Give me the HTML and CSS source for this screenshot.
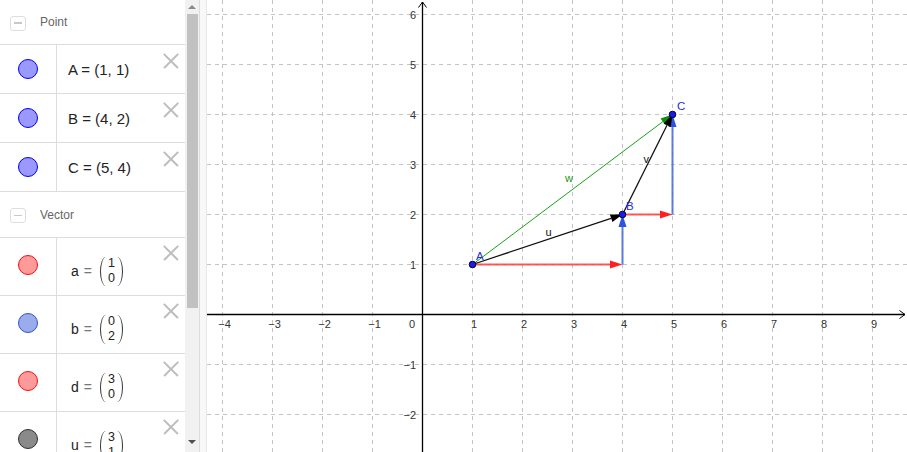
FILE: index.html
```html
<!DOCTYPE html>
<html>
<head>
<meta charset="utf-8">
<link rel="stylesheet" href="styles.css">
</head>
<body>
<div class="app">
  <div class="sidebar">
    <div class="list">
      <div class="group">
        <span class="toggle"></span><span class="gname">Point</span>
      </div>
      <div class="row">
        <div class="marble-col"><span class="marble m-point"></span></div>
        <div class="content">A = (1, 1)</div>
        <span class="del"></span>
      </div>
      <div class="row">
        <div class="marble-col"><span class="marble m-point"></span></div>
        <div class="content">B = (4, 2)</div>
        <span class="del"></span>
      </div>
      <div class="row">
        <div class="marble-col"><span class="marble m-point"></span></div>
        <div class="content">C = (5, 4)</div>
        <span class="del"></span>
      </div>
      <div class="group group-v">
        <span class="toggle"></span><span class="gname">Vector</span>
      </div>
      <div class="row vrow">
        <div class="marble-col"><span class="marble m-red"></span></div>
        <div class="content vec"><span class="vname">a</span><span class="eq">=</span><span class="pmat"><span class="nums"><span>1</span><span>0</span></span></span></div>
        <span class="del"></span>
      </div>
      <div class="row vrow">
        <div class="marble-col"><span class="marble m-blue"></span></div>
        <div class="content vec"><span class="vname">b</span><span class="eq">=</span><span class="pmat"><span class="nums"><span>0</span><span>2</span></span></span></div>
        <span class="del"></span>
      </div>
      <div class="row vrow">
        <div class="marble-col"><span class="marble m-red"></span></div>
        <div class="content vec"><span class="vname">d</span><span class="eq">=</span><span class="pmat"><span class="nums"><span>3</span><span>0</span></span></span></div>
        <span class="del"></span>
      </div>
      <div class="row vrow">
        <div class="marble-col"><span class="marble m-gray"></span></div>
        <div class="content vec"><span class="vname">u</span><span class="eq">=</span><span class="pmat"><span class="nums"><span>3</span><span>1</span></span></span></div>
        <span class="del"></span>
      </div>
    </div>
    <div class="scrollbar">
      <span class="arrow-up"></span>
      <span class="thumb"></span>
      <span class="track-rest"></span>
      <span class="arrow-down"></span>
    </div>
  </div>
  <div class="divider"></div>
  <div class="graph">
    <svg class="plot" width="700" height="452" viewBox="207 0 700 452" xmlns="http://www.w3.org/2000/svg">
      <path class="grid" d="M222.5 0V452M272.5 0V452M322.5 0V452M372.5 0V452M472.5 0V452M522.5 0V452M572.5 0V452M622.5 0V452M672.5 0V452M722.5 0V452M772.5 0V452M822.5 0V452M872.5 0V452M207 14.5H907M207 64.5H907M207 114.5H907M207 164.5H907M207 214.5H907M207 264.5H907M207 364.5H907M207 414.5H907"/>
      <path class="axis" d="M207 314.5H905M422.5 452V2"/>
      <path class="axis-arrow" d="M899.5 310.5L905 314.5L899.5 318.5M418.5 7.5L422.5 2L426.5 7.5"/>
      <g class="ticklabels">
        <text x="224.5" y="328" text-anchor="middle">−4</text>
        <text x="274.5" y="328" text-anchor="middle">−3</text>
        <text x="324.5" y="328" text-anchor="middle">−2</text>
        <text x="374.5" y="328" text-anchor="middle">−1</text>
        <text x="412" y="328" text-anchor="middle">0</text>
        <text x="474" y="328" text-anchor="middle">1</text>
        <text x="524" y="328" text-anchor="middle">2</text>
        <text x="574" y="328" text-anchor="middle">3</text>
        <text x="624" y="328" text-anchor="middle">4</text>
        <text x="674" y="328" text-anchor="middle">5</text>
        <text x="724" y="328" text-anchor="middle">6</text>
        <text x="774" y="328" text-anchor="middle">7</text>
        <text x="824" y="328" text-anchor="middle">8</text>
        <text x="874" y="328" text-anchor="middle">9</text>
        <text x="416" y="18.5" text-anchor="end">6</text>
        <text x="416" y="68.5" text-anchor="end">5</text>
        <text x="416" y="118.5" text-anchor="end">4</text>
        <text x="416" y="168.5" text-anchor="end">3</text>
        <text x="416" y="218.5" text-anchor="end">2</text>
        <text x="416" y="268.5" text-anchor="end">1</text>
        <text x="416" y="368.5" text-anchor="end">−1</text>
        <text x="416" y="418.5" text-anchor="end">−2</text>
      </g>
      <g class="v-red">
        <path d="M472.5 264.5H611"/>
        <polygon points="622.5,264.5 610,260.5 610,268.5"/>
        <path d="M622.5 214.5H661"/>
        <polygon points="672.5,214.5 660,210.5 660,218.5"/>
      </g>
      <g class="v-blue">
        <path d="M622.5 264.5V226"/>
        <polygon points="622.5,214.5 618.5,227 626.5,227"/>
        <path d="M672.5 214.5V126"/>
        <polygon points="672.5,114.5 668.5,127 676.5,127"/>
      </g>
      <g class="v-green">
        <path d="M472.5 264.5L663 121.5"/>
        <polygon points="672.5,114.5 665.3,124.9 660.5,118.5"/>
      </g>
      <g class="v-black">
        <path d="M472.5 264.5L611 218.3"/>
        <polygon points="622.5,214.5 612.4,222.1 609.9,214.5"/>
        <path d="M622.5 214.5L667 125.3"/>
        <polygon points="672.5,114.5 670.7,127 663.6,123.4"/>
      </g>
      <g class="pts">
        <circle cx="472.5" cy="264.5" r="3.3"/>
        <circle cx="622.5" cy="214.5" r="3.3"/>
        <circle cx="672.5" cy="114.5" r="3.3"/>
      </g>
      <g class="ptlabels">
        <text x="476" y="259.5">A</text>
        <text x="626" y="209.5">B</text>
        <text x="677" y="109.5">C</text>
      </g>
      <g class="vlabels">
        <text x="545.5" y="236">u</text>
        <text x="643.5" y="163">v</text>
        <text class="wl" x="565" y="181.5">w</text>
      </g>
    </svg>
  </div>
</div>
</body>
</html>
```

FILE: styles.css
```css
html, body {
  margin: 0;
  padding: 0;
  background: #ffffff;
}

.app {
  display: flex;
  width: 907px;
  height: 452px;
  overflow: hidden;
  font-family: "Liberation Sans", Arial, sans-serif;
}

.sidebar {
  display: flex;
  width: 199px;
  height: 452px;
  flex: none;
}

.list {
  width: 185px;
  flex: none;
  overflow: hidden;
  background: #ffffff;
}

.group {
  display: flex;
  align-items: center;
  height: 44px;
  border-bottom: 1px solid #dddddd;
  box-sizing: content-box;
  padding-left: 10px;
}

.group-v {
  height: 45px;
}

.toggle {
  position: relative;
  width: 14px;
  height: 13px;
  border: 1px solid #dedede;
  border-radius: 3px;
  display: flex;
  align-items: center;
  justify-content: center;
  margin-top: 2px;
}

.toggle::after {
  content: "";
  width: 8px;
  height: 1.5px;
  background: #c8c8c8;
}

.gname {
  margin-left: 14px;
  font-size: 12px;
  color: #666666;
}

.row {
  display: flex;
  height: 48px;
  border-bottom: 1px solid #dddddd;
}

.vrow {
  height: 57px;
}

.marble-col {
  width: 56px;
  flex: none;
  border-right: 1px solid #dddddd;
  display: flex;
  align-items: center;
  justify-content: center;
}

.marble {
  width: 18px;
  height: 18px;
  border-radius: 50%;
  border: 1px solid;
  margin-right: 1px;
}

.vrow .marble {
  margin-top: -3px;
}

.m-point {
  background: #9999ff;
  border-color: #0000ee;
}

.m-red {
  background: #ff9a9a;
  border-color: #ee1111;
}

.m-blue {
  background: #9aacec;
  border-color: #2f52cc;
}

.m-gray {
  background: #8a8a8a;
  border-color: #2e2e2e;
}

.content {
  flex: 1;
  display: flex;
  align-items: center;
  padding-left: 11px;
  font-size: 15px;
  color: #222222;
  white-space: pre;
}

.vec {
  padding-left: 14px;
  padding-top: 9px;
}

.vname {
  font-size: 14px;
  color: #222222;
}

.eq {
  font-size: 14px;
  color: #777777;
  margin: 0 8px 0 5px;
}

.pmat {
  display: flex;
  height: 29px;
}

.pmat::before,
.pmat::after {
  content: "";
  width: 5px;
  flex: none;
}

.pmat::before {
  border-left: 1.5px solid #333333;
  border-radius: 100% 0 0 100% / 50% 0 0 50%;
}

.pmat::after {
  border-right: 1.5px solid #333333;
  border-radius: 0 100% 100% 0 / 0 50% 50% 0;
}

.nums {
  display: flex;
  flex-direction: column;
  justify-content: center;
  align-items: center;
  font-size: 12.5px;
  line-height: 15px;
  color: #222222;
  padding: 0 2px;
}

.del {
  position: relative;
  width: 16px;
  height: 16px;
  margin: 8px 6px 0 0;
  flex: none;
}

.vrow .del {
  margin-top: 7px;
}

.del::before,
.del::after {
  content: "";
  position: absolute;
  left: -2px;
  top: 7.25px;
  width: 20px;
  height: 1.5px;
  background: #bdbdbd;
  transform: rotate(45deg);
}

.del::after {
  transform: rotate(-45deg);
}

.scrollbar {
  width: 14px;
  flex: none;
  background: #f1f1f1;
  display: flex;
  flex-direction: column;
  align-items: center;
}

.arrow-up {
  width: 0;
  height: 0;
  margin-top: 5px;
  border-left: 4px solid transparent;
  border-right: 4px solid transparent;
  border-bottom: 4px solid #8a8a8a;
}

.thumb {
  width: 11px;
  height: 294px;
  margin-top: 5px;
  background: #c1c1c1;
}

.track-rest {
  flex: 1;
}

.arrow-down {
  width: 0;
  height: 0;
  margin-bottom: 8px;
  border-left: 4px solid transparent;
  border-right: 4px solid transparent;
  border-top: 4px solid #505050;
}

.divider {
  width: 6px;
  flex: none;
  background: #f8f8f8;
  border-left: 1px solid #dcdcdc;
  border-right: 1px solid #e8e8e8;
}

.graph {
  flex: 1;
  background: #ffffff;
}

.plot {
  display: block;
}

.grid {
  fill: none;
  stroke: #c4c4c4;
  stroke-width: 1;
  stroke-dasharray: 4 4;
}

.axis {
  fill: none;
  stroke: #000000;
  stroke-width: 1.3;
}

.axis-arrow {
  fill: none;
  stroke: #000000;
  stroke-width: 1;
}

.ticklabels text {
  font-family: "Liberation Sans", Arial, sans-serif;
  font-size: 11px;
  fill: #333333;
}

.v-red path {
  stroke: #ff3b3b;
  stroke-width: 2;
  stroke-opacity: 0.85;
  fill: none;
}

.v-red polygon {
  fill: #ff2020;
}

.v-blue path {
  stroke: #4a6ede;
  stroke-width: 2;
  stroke-opacity: 0.9;
  fill: none;
}

.v-blue polygon {
  fill: #2a55dd;
}

.v-green path {
  stroke: #17a317;
  stroke-width: 1;
  fill: none;
}

.v-green polygon {
  fill: #0f8f0f;
}

.v-black path {
  stroke: #111111;
  stroke-width: 1.3;
  fill: none;
}

.v-black polygon {
  fill: #000000;
}

.pts circle {
  fill: #1a1aee;
  stroke: #000033;
  stroke-width: 1;
}

.ptlabels text {
  font-family: "Liberation Sans", Arial, sans-serif;
  font-size: 11.5px;
  fill: #1f2ae0;
}

.vlabels text {
  font-family: "Liberation Sans", Arial, sans-serif;
  font-size: 11px;
  fill: #111111;
}

.vlabels .wl {
  fill: #1b961b;
}
```
